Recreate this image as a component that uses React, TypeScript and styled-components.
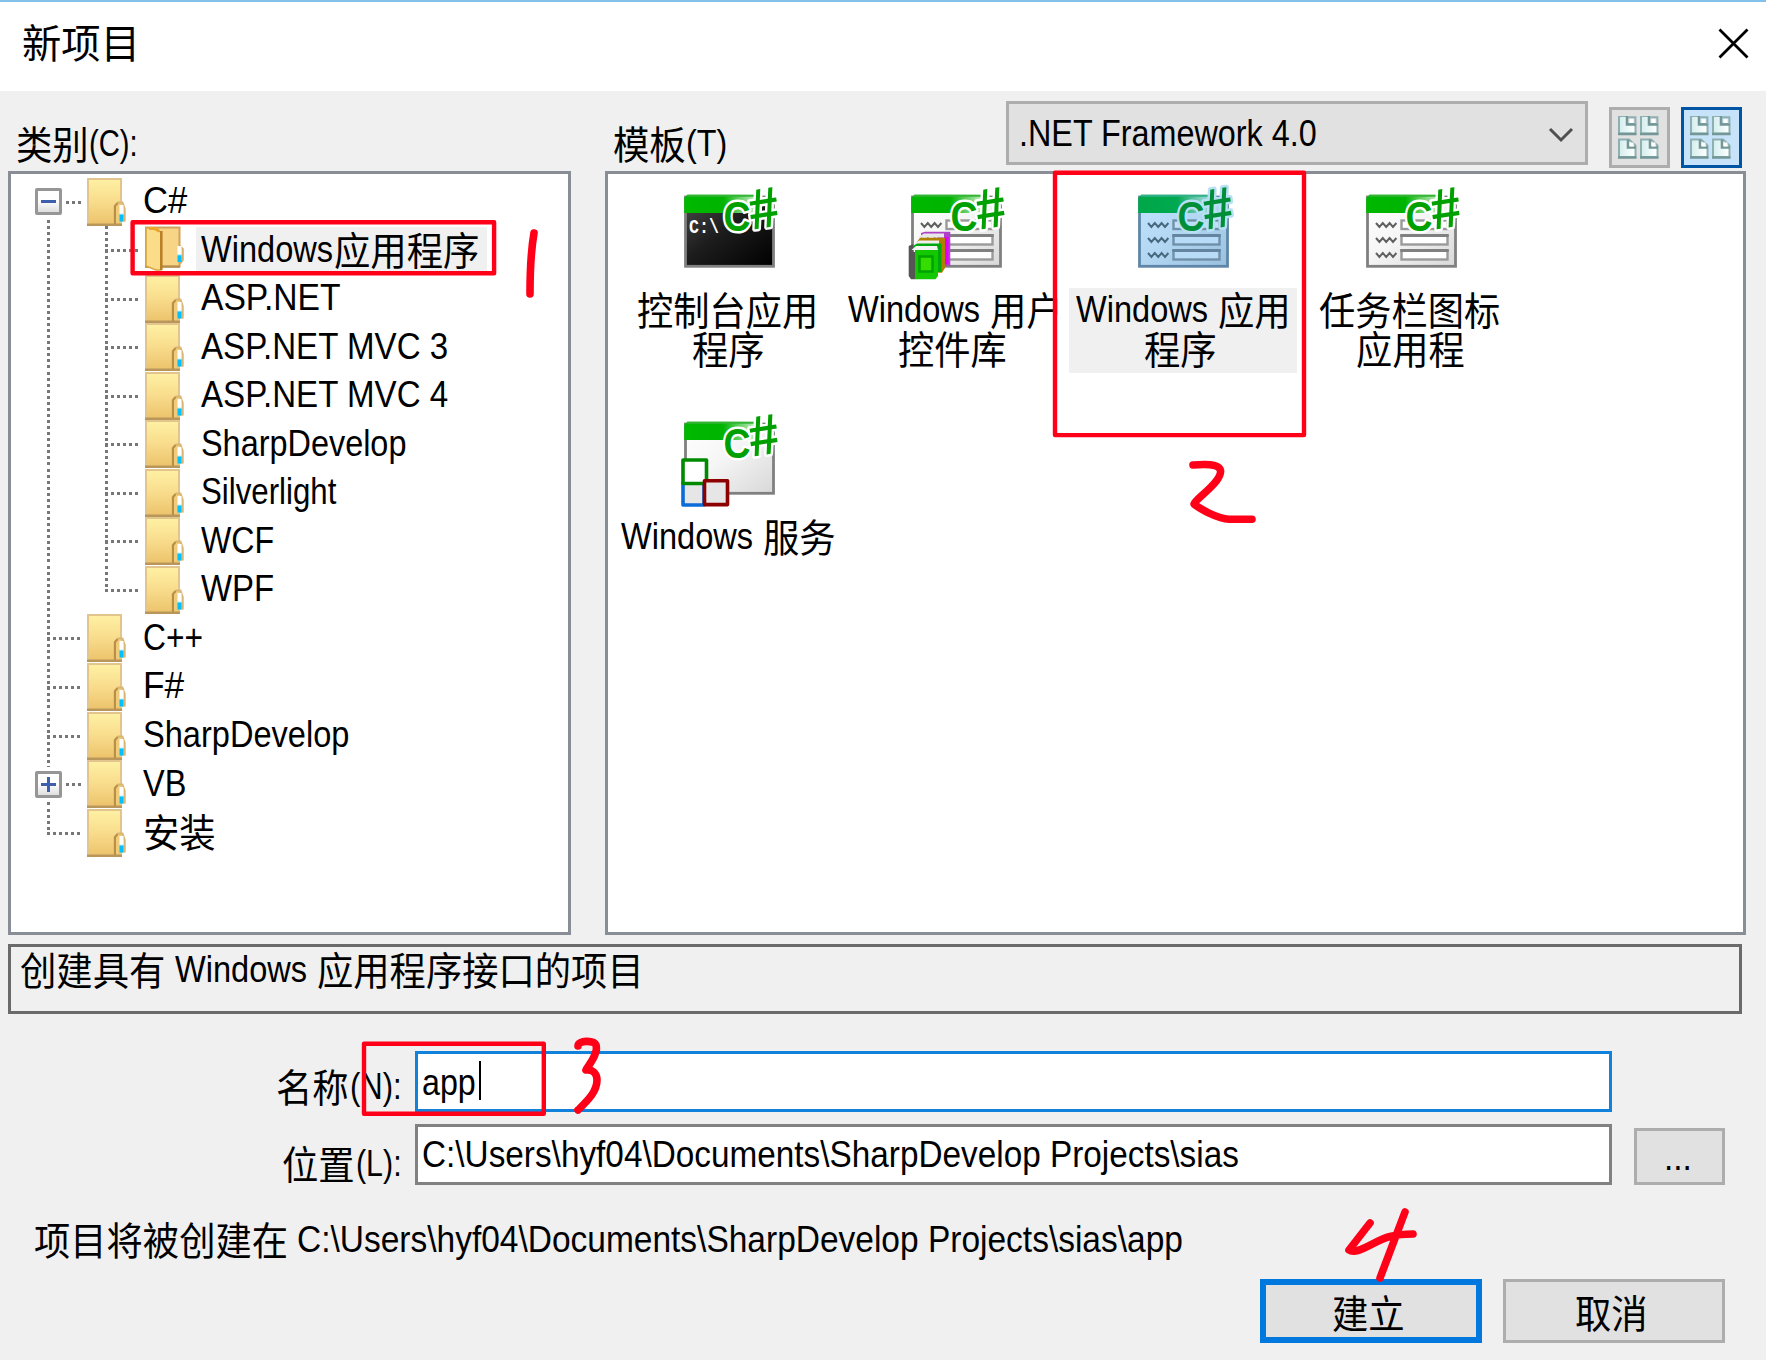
import React, { useLayoutEffect, useRef, useState } from "react";
import styled, { createGlobalStyle, css } from "styled-components";

const GlobalStyle = createGlobalStyle`
  * { box-sizing: border-box; }
  html, body { margin: 0; padding: 0; background: #f0f0f0; }
  body { width: 1766px; height: 1360px; overflow: hidden; }
`;

const latinFont = `"Liberation Sans", Arial, "Noto Sans CJK SC", sans-serif`;
const cjkFont = `"Noto Sans CJK SC", "Liberation Sans", sans-serif`;

/* ---------- text ---------- */

const Slot = styled.span<{ $w: number; $cjk?: boolean }>`
  display: block;
  flex: none;
  width: ${(p) => p.$w}px;
  padding-top: ${(p) => (p.$cjk ? 0 : 2)}px;
  white-space: pre;
`;

const Glyphs = styled.span<{ $cjk?: boolean; $size?: number }>`
  display: inline-block;
  transform-origin: 0 50%;
  line-height: 40px;
  vertical-align: top;
  font-family: ${(p) => (p.$cjk ? cjkFont : latinFont)};
  font-size: ${(p) => p.$size ?? (p.$cjk ? 38.5 : 37)}px;
`;

type FitProps = { w: number; cjk?: boolean; size?: number; children: string };

/* Condenses a run of text horizontally so that it fills the given width. */
function Fit({ w, cjk, size, children }: FitProps) {
  const ref = useRef<HTMLSpanElement>(null);
  const [scale, setScale] = useState(1);
  useLayoutEffect(() => {
    if (ref.current) setScale(w / ref.current.offsetWidth);
  }, [w, children]);
  return (
    <Slot $w={w} $cjk={cjk}>
      <Glyphs ref={ref} $cjk={cjk} $size={size} style={{ transform: `scaleX(${scale})` }}>
        {children}
      </Glyphs>
    </Slot>
  );
}

const Cjk = ({ children }: { children: string }) => (
  <Fit cjk w={children.length * 36.35}>
    {children}
  </Fit>
);

const Line = styled.div<{ $gap?: number; $center?: boolean; $trail?: number }>`
  display: flex;
  align-items: flex-start;
  height: 40px;
  gap: ${(p) => p.$gap ?? 1}px;
  padding-right: ${(p) => p.$trail ?? 0}px;
  justify-content: ${(p) => (p.$center ? "center" : "flex-start")};
  color: #000;
`;

/* ---------- window ---------- */

const Dialog = styled.div`
  position: relative;
  width: 1766px;
  height: 1360px;
  background: #f0f0f0;
  border-top: 2px solid #83c0ea;
  overflow: hidden;
`;

const TitleBar = styled.header`
  display: flex;
  justify-content: space-between;
  align-items: flex-start;
  height: 89px;
  padding: 19px 17px 0 22px;
  background: #fff;
`;

const CloseIcon = styled.svg`
  width: 31px;
  height: 31px;
  margin-top: 6.5px;
`;

const Content = styled.main`
  display: flex;
  flex-direction: column;
  padding-left: 8px;
`;

const Columns = styled.section`
  display: grid;
  grid-template-columns: 563px 1140.5px;
  column-gap: 34px;
`;

const ColumnHead = styled.div`
  display: flex;
  height: 79.5px;
  padding-left: 8px;
`;

const HeadLabel = styled.div<{ $w?: number }>`
  flex: none;
  width: ${(p) => p.$w ?? 300}px;
  padding-top: 31px;
`;

const Panel = styled.div`
  height: 764px;
  background: #fff;
  border: 3px solid #888d96;
`;

/* ---------- tree ---------- */

const Tree = styled(Panel)`
  padding-top: 4px;
`;

const TreeRow = styled.div`
  display: flex;
  height: 48.55px;
`;

const vDots = "repeating-linear-gradient(180deg, #777 0 3px, transparent 3px 6.07px)";
const hDots = "repeating-linear-gradient(90deg, #777 0 3px, transparent 3px 6.07px)";

const Gutter = styled.div<{ $w: number; $x: number; $from: number; $to: number; $hx?: number; $hw: number }>`
  display: flex;
  align-items: center;
  flex: none;
  width: ${(p) => p.$w}px;
  padding-left: 24px;
  background-image: ${vDots}, ${hDots};
  background-repeat: no-repeat;
  background-position: ${(p) => p.$x}px ${(p) => p.$from}px, ${(p) => p.$hx ?? p.$x}px 23px;
  background-size: 3px ${(p) => p.$to - p.$from}px, ${(p) => p.$hw}px 3px;
`;

const Expander = styled.div`
  display: grid;
  place-items: center;
  width: 27px;
  height: 27px;
  border: 3px solid #969696;
  border-radius: 2px;
  background: linear-gradient(#fff 45%, #dedede);
  box-shadow: 0 0 0 4px #fff;
`;

const FolderSvg = styled.svg`
  flex: none;
  width: 39px;
  height: 48.55px;
  overflow: visible;
`;

const NodeLabel = styled.div<{ $selected?: boolean }>`
  height: 44px;
  margin: 0.5px 0 0 12px;
  padding: 1px 8px 0 5px;
  ${(p) =>
    p.$selected &&
    css`
      background: #f0f0f0;
    `}
`;

const ClosedFolder = () => (
  <FolderSvg viewBox="0 0 39 48.5">
    <defs>
      <linearGradient id="fold" x1="0" y1="0" x2="0" y2="1">
        <stop offset="0" stopColor="#fff1a4" />
        <stop offset="0.5" stopColor="#f8dc8c" />
        <stop offset="1" stopColor="#ecc26a" />
      </linearGradient>
      <linearGradient id="tab" x1="0" y1="0" x2="0" y2="1">
        <stop offset="0.5" stopColor="#fff" />
        <stop offset="0.62" stopColor="#00c0ff" />
      </linearGradient>
    </defs>
    <rect x="1" y="1" width="33" height="46" fill="url(#fold)" stroke="#e2c58c" strokeWidth="2" />
    <path d="M0 46.8H35" stroke="#b9975b" strokeWidth="2.6" />
    <path d="M27.5 45V28L31 24.5H35.5L37.8 31V43.5" fill="#efcb7a" stroke="#d8b674" strokeWidth="1.8" />
    <path d="M28 46V28L30.500 25" fill="none" stroke="#b98f48" strokeWidth="2" />
    <rect x="32.5" y="27" width="4" height="16.5" fill="url(#tab)" />
  </FolderSvg>
);

const OpenFolder = () => (
  <FolderSvg viewBox="0 0 39 48.5">
    <rect x="1" y="1.5" width="33.5" height="39" fill="#f8d486" stroke="#cfa45c" strokeWidth="2" />
    <path d="M0 40.6H35" stroke="#b88f4e" strokeWidth="2.4" />
    <path d="M34.500 20L37.8 23V34L35 38" fill="#efcf8a" stroke="#d6b06a" strokeWidth="2" />
    <rect x="32.5" y="20" width="4" height="16" fill="url(#tab)" />
    <path d="M1 2H6L16 6V44H11L1 40Z" fill="#fbdc88" stroke="#d8a548" strokeWidth="1.6" />
    <path d="M4 2.5H11L14 5.5" stroke="#eba72c" strokeWidth="3" fill="none" />
    <path d="M16.3 5V44" stroke="#b9802a" strokeWidth="2.6" />
  </FolderSvg>
);

type Node = { text?: string; w?: number; cjk?: string; open?: boolean; sign?: "-" | "+" };

const children: Node[] = [
  { text: "Windows", w: 132, cjk: "应用程序", open: true },
  { text: "ASP.NET", w: 140 },
  { text: "ASP.NET MVC 3", w: 247 },
  { text: "ASP.NET MVC 4", w: 247 },
  { text: "SharpDevelop", w: 205 },
  { text: "Silverlight", w: 135 },
  { text: "WCF", w: 73 },
  { text: "WPF", w: 73 },
];

const roots: Node[] = [
  { text: "C++", w: 60 },
  { text: "F#", w: 41 },
  { text: "SharpDevelop", w: 206 },
  { text: "VB", w: 43, sign: "+" },
  { cjk: "安装" },
];

const Caption = ({ node }: { node: Node }) => (
  <NodeLabel $selected={node.open}>
    <Line>
      {node.text && <Fit w={node.w!}>{node.text}</Fit>}
      {node.cjk && <Cjk>{node.cjk}</Cjk>}
    </Line>
  </NodeLabel>
);

const Sign = ({ plus }: { plus?: boolean }) => (
  <Expander>
    <svg width="17" height="17" viewBox="0 0 17 17">
      <path d={plus ? "M1 8.5H16M8.5 1V16" : "M1 8.5H16"} stroke="#3f5fae" strokeWidth="3" />
    </svg>
  </Expander>
);

const RootRow = ({ node, from = 0, to = 48.55 }: { node: Node; from?: number; to?: number }) => (
  <TreeRow>
    <Gutter $w={76} $x={36} $from={from} $to={to} $hx={node.sign ? 55 : 36} $hw={node.sign ? 16 : 35}>
      {node.sign && <Sign plus={node.sign === "+"} />}
    </Gutter>
    <ClosedFolder />
    <Caption node={node} />
  </TreeRow>
);

/* ---------- templates ---------- */

const Templates = styled(Panel)`
  display: grid;
  grid-template-columns: repeat(4, 227.4px);
  grid-auto-rows: 227.3px;
  align-content: start;
  padding: 6px 0 0 6.5px;
`;

const Item = styled.div`
  display: flex;
  flex-direction: column;
  align-items: center;
`;

const ItemIcon = styled.svg`
  width: 97px;
  height: 100px;
  margin-bottom: 8.7px;
  overflow: visible;
`;

const ItemLabel = styled.div<{ $selected?: boolean }>`
  width: 227.4px;
  height: 84.6px;
  padding-top: 1px;
  background: ${(p) => (p.$selected ? "#f0f0f0" : "transparent")};

  & > ${Line} {
    height: 39px;
  }

  & ${Glyphs} {
    line-height: 38px;
  }
`;

const IconText = styled.text`
  font-family: "Liberation Sans", Arial, sans-serif;
  font-weight: 700;
  paint-order: stroke;
  stroke-linejoin: round;
`;

const PromptText = styled.text`
  font-family: "Liberation Mono", monospace;
  font-weight: 700;
  fill: #fff;
`;

type Kind = "console" | "control" | "form" | "tray" | "service";

const squiggle = (y: number) => `M14 ${y - 2}l3.4 4 3.4-4 3.4 4 3.4-4 3.4 4 3.4-4`;

function TemplateIcon({ kind }: { kind: Kind }) {
  const blue = kind === "form";
  const dark = kind === "console";
  const fields = kind === "control" || kind === "form" || kind === "tray";
  const green = blue ? "#008f38" : "#00a000";
  const edge = blue ? "#5f86a6" : "#808080";
  const id = `t-${kind}`;
  return (
    <ItemIcon viewBox="0 0 97 100">
      <defs>
        <linearGradient id={`${id}-b`} x1="0" y1="0" x2="1" y2="1">
          <stop offset="0" stopColor={dark ? "#4a4a4a" : blue ? "#c0e2ff" : "#fff"} />
          <stop offset="0.45" stopColor={dark ? "#1d1d1d" : blue ? "#b4d8f4" : "#f6f6f6"} />
          <stop offset="1" stopColor={dark ? "#000" : blue ? "#98c0de" : "#d8d8d8"} />
        </linearGradient>
        <linearGradient id={`${id}-h`}>
          <stop offset="0" stopColor={blue ? "#00a848" : "#00b800"} />
          <stop offset="0.5" stopColor={blue ? "#00a850" : "#00b400"} />
          <stop offset="0.8" stopColor={blue ? "#80ccc0" : "#90dc90"} />
          <stop offset="1" stopColor={blue ? "#b4dcf0" : "#e8f8e8"} />
        </linearGradient>
      </defs>
      <rect x="5.5" y="17" width="88" height="69.3" fill={`url(#${id}-b)`} stroke={edge} strokeWidth="2.8" />
      <path d="M4.2 33V18L7.5 14.7H82V33Z" fill={`url(#${id}-h)`} />
      <path d="M7 15.8H80" stroke={blue ? "#30b088" : "#34b434"} strokeWidth="2" />
      {fields && (
        <g fill="none">
          <path d={`${squiggle(45)}${squiggle(60)}${squiggle(75)}`} stroke={blue ? "#48687e" : "#606060"} strokeWidth="2" />
          <g stroke={blue ? "#7090a8" : "#9a9a9a"} strokeWidth="2.4">
            <rect x="39.5" y="40.5" width="46" height="8.5" fill={blue ? "#c4e0f6" : "#fff"} />
            <rect x="39.5" y="55.5" width="46" height="9" fill={blue ? "#b8dcf8" : "#fff"} />
            <rect x="39.5" y="70.5" width="46" height="9" fill={blue ? "#b8dcf8" : "#fff"} />
            <path d="M38.3 55.5H86.7M38.3 70.5H86.7" strokeWidth="3" stroke={blue ? "#6484a0" : "#808080"} />
          </g>
        </g>
      )}
      {dark && (
        <PromptText x="9" y="53" fontSize="21" textLength="30" lengthAdjust="spacingAndGlyphs">
          C:\
        </PromptText>
      )}
      <g fill={green} stroke={blue ? "#b8e0f4" : "#fff"} strokeWidth="5">
        <IconText x="43.5" y="51" fontSize="43" textLength="27" lengthAdjust="spacingAndGlyphs">
          C
        </IconText>
        <IconText x="68.5" y="48" fontSize="57" textLength="30" lengthAdjust="spacingAndGlyphs" transform="rotate(-9 82 28)">
          #
        </IconText>
      </g>
      {kind === "control" && (
        <g>
          <path d="M14 53L18 51.7H43.3V86H30V57H14Z" fill="#b040c8" />
          <path d="M37 57H41.5V84H37Z" fill="#e400ff" />
          <path d="M12 56.5L17 53.5H37V57.5H12Z" fill="#e8e8e8" />
          <path d="M10 62L13 57.7H38V88L35 92.7H20V62Z" fill="#b08000" />
          <path d="M7 64L12 60.5H32V65H7Z" fill="#eee" />
          <path d="M6 66L10 63.5H34.5V92H26V70H6Z" fill="#00a810" />
          <path d="M1.7 66L6 64V72H8.5V99.3H4L1.7 96Z" fill="#555" />
          <path d="M4.5 70L9 66H30L31 70Z" fill="#f4f4f4" />
          <path d="M8 70H31V96L28.5 99.3H8Z" fill="#14c800" />
          <rect x="12.5" y="76.5" width="13" height="15" fill="#34dc00" stroke="#00a400" strokeWidth="2.6" />
        </g>
      )}
      {kind === "service" && (
        <g fill="#e6e6e6" strokeWidth="3.6" strokeLinejoin="round">
          <rect x="3" y="76" width="21" height="22" stroke="#0a6cd8" />
          <rect x="3" y="53" width="23.5" height="23.5" fill="#fff" stroke="#008a00" />
          <rect x="24.5" y="73.8" width="23" height="23.8" stroke="#8c0000" />
        </g>
      )}
    </ItemIcon>
  );
}

/* ---------- controls ---------- */

const Combo = styled.div`
  display: flex;
  flex: none;
  justify-content: space-between;
  width: 582px;
  height: 64px;
  margin: 9.5px 21.3px 0 0;
  padding: 8.5px 11px 0 10px;
  background: #e1e1e1;
  border: 3px solid #adadad;
`;

const Chevron = styled.svg`
  width: 26px;
  height: 16px;
  margin-top: 15px;
`;

const ViewButton = styled.button<{ $active?: boolean }>`
  display: block;
  flex: none;
  width: 61px;
  height: 61px;
  margin: 15.5px 11.7px 0 0;
  padding: 6px;
  background: ${(p) => (p.$active ? "#c7e3f9" : "#e1e1e1")};
  border: 3px solid ${(p) => (p.$active ? "#0054a4" : "#adadad")};

  & > svg {
    display: block;
    width: 43px;
    height: 43px;
  }
`;

const sheets = [
  { x: 0, y: 0, up: true },
  { x: 22, y: 0, up: true },
  { x: 0, y: 22.5, up: false },
  { x: 22, y: 22.5, up: false },
];

const SheetsIcon = () => (
  <svg viewBox="0 0 43 43">
    <defs>
      <linearGradient id="sheet">
        <stop offset="0" stopColor="#d4eeee" />
        <stop offset="1" stopColor="#fff" />
      </linearGradient>
    </defs>
    {sheets.map((s) => (
      <g key={`${s.x}-${s.y}`} transform={`translate(${s.x} ${s.y})`}>
        <path
          d={s.up ? "M1 0V17.5H17.5V8H9V0Z" : "M1 1H11L17.5 7V18.5H1Z"}
          fill="url(#sheet)"
          stroke="#8fb0b2"
          strokeWidth="2"
        />
        <path d={s.up ? "M0 18H18.5M9 0V8.5H18" : "M0 19H18.5M10 1V9H18"} fill="none" stroke="#739696" strokeWidth="2.6" />
        {s.up && <path d="M10 1.2H17.4V8" fill="none" stroke="#8fb0b2" strokeWidth="2" />}
        <rect x="11.5" y={s.up ? 3 : 4} width="4" height="4" fill="#fff" />
      </g>
    ))}
  </svg>
);

const Description = styled.div`
  width: 1734px;
  height: 70.5px;
  margin-top: 9px;
  padding: 1px 0 0 9px;
  border: 3px solid #6a6a6a;
`;

const Field = styled.div<{ $top: number }>`
  display: flex;
  align-items: flex-start;
  margin-top: ${(p) => p.$top}px;
`;

const FieldLabel = styled.div<{ $top: number }>`
  display: flex;
  justify-content: flex-end;
  width: 394px;
  height: 60.5px;
  margin-right: 12.6px;
  padding-top: ${(p) => p.$top}px;
`;

const Input = styled.div<{ $focus?: boolean }>`
  display: flex;
  width: 1197.5px;
  height: 61px;
  padding: 6.5px 0 0 4px;
  background: #fff;
  border: 3px solid ${(p) => (p.$focus ? "#1182dc" : "#818181")};
`;

const Caret = styled.span`
  width: 2.5px;
  height: 39px;
  margin: 0 0 0 3px;
  background: #000;
`;

const Button = styled.button<{ $primary?: boolean; $w?: number; $h?: number }>`
  display: flex;
  justify-content: center;
  align-items: flex-start;
  width: ${(p) => p.$w ?? 221.5}px;
  height: ${(p) => p.$h ?? 64}px;
  padding: ${(p) => (p.$primary ? 6 : 9)}px 4px 0 0;
  color: #000;
  background: #e1e1e1;
  border: ${(p) => (p.$primary ? "6px solid #0078de" : "3px solid #adadad")};
`;

const Browse = styled(Button)`
  margin: 4px 0 0 21.5px;
  padding: 5px 3px 0 0;
`;

const Destination = styled.div`
  margin-top: 33px;
  padding-left: 26px;
`;

const Actions = styled.footer`
  display: flex;
  gap: 21.5px;
  margin-top: 20.5px;
  padding-left: 1252px;
`;

const Annotations = styled.svg`
  position: absolute;
  left: 0;
  top: -2px;
  width: 1766px;
  height: 1360px;
  pointer-events: none;
`;

export default function App() {
  return (
    <>
      <GlobalStyle />
      <Dialog>
        <TitleBar>
          <Line>
            <Fit cjk size={40} w={118}>
              新项目
            </Fit>
          </Line>
          <CloseIcon viewBox="0 0 31 31">
            <path d="M1.5 1.5L29.5 29.5M29.5 1.5L1.5 29.5" stroke="#000" strokeWidth="2.8" />
          </CloseIcon>
        </TitleBar>

        <Content>
          <Columns>
            <div>
              <ColumnHead>
                <HeadLabel>
                  <Line $gap={0}>
                    <Cjk>类别</Cjk>
                    <Fit w={49}>(C):</Fit>
                  </Line>
                </HeadLabel>
              </ColumnHead>
              <Tree>
                <RootRow node={{ text: "C#", w: 44, sign: "-" }} from={42.5} />
                {children.map((node, i) => (
                  <TreeRow key={node.text}>
                    <Gutter $w={76} $x={36} $from={0} $to={48.55} $hw={0} />
                    <Gutter $w={58} $x={17.5} $from={0} $to={i === children.length - 1 ? 24 : 48.55} $hw={34} />
                    {node.open ? <OpenFolder /> : <ClosedFolder />}
                    <Caption node={node} />
                  </TreeRow>
                ))}
                {roots.map((node, i) => (
                  <RootRow key={i} node={node} to={i === roots.length - 1 ? 24 : 48.55} />
                ))}
              </Tree>
            </div>

            <div>
              <ColumnHead>
                <HeadLabel $w={392.5}>
                  <Line $gap={0}>
                    <Cjk>模板</Cjk>
                    <Fit w={41}>(T)</Fit>
                  </Line>
                </HeadLabel>
                <Combo>
                  <Line>
                    <Fit w={298}>.NET Framework 4.0</Fit>
                  </Line>
                  <Chevron viewBox="0 0 26 16">
                    <path d="M2 2L13 13L24 2" fill="none" stroke="#505050" strokeWidth="3" />
                  </Chevron>
                </Combo>
                <ViewButton>
                  <SheetsIcon />
                </ViewButton>
                <ViewButton $active>
                  <SheetsIcon />
                </ViewButton>
              </ColumnHead>
              <Templates>
                <Item>
                  <TemplateIcon kind="console" />
                  <ItemLabel>
                    <Line $center>
                      <Cjk>控制台应用</Cjk>
                    </Line>
                    <Line $center>
                      <Cjk>程序</Cjk>
                    </Line>
                  </ItemLabel>
                </Item>
                <Item>
                  <TemplateIcon kind="control" />
                  <ItemLabel>
                    <Line $center $gap={10}>
                      <Fit w={132}>Windows</Fit>
                      <Cjk>用户</Cjk>
                    </Line>
                    <Line $center $trail={6}>
                      <Cjk>控件库</Cjk>
                    </Line>
                  </ItemLabel>
                </Item>
                <Item>
                  <TemplateIcon kind="form" />
                  <ItemLabel $selected>
                    <Line $center $gap={10}>
                      <Fit w={132}>Windows</Fit>
                      <Cjk>应用</Cjk>
                    </Line>
                    <Line $center $trail={5}>
                      <Cjk>程序</Cjk>
                    </Line>
                  </ItemLabel>
                </Item>
                <Item>
                  <TemplateIcon kind="tray" />
                  <ItemLabel>
                    <Line $center>
                      <Cjk>任务栏图标</Cjk>
                    </Line>
                    <Line $center>
                      <Cjk>应用程</Cjk>
                    </Line>
                  </ItemLabel>
                </Item>
                <Item>
                  <TemplateIcon kind="service" />
                  <ItemLabel>
                    <Line $center $gap={10}>
                      <Fit w={132}>Windows</Fit>
                      <Cjk>服务</Cjk>
                    </Line>
                  </ItemLabel>
                </Item>
              </Templates>
            </div>
          </Columns>

          <Description>
            <Line $gap={10}>
              <Cjk>创建具有</Cjk>
              <Fit w={132}>Windows</Fit>
              <Cjk>应用程序接口的项目</Cjk>
            </Line>
          </Description>

          <Field $top={37}>
            <FieldLabel $top={14}>
              <Line>
                <Cjk>名称</Cjk>
                <Fit w={52}>(N):</Fit>
              </Line>
            </FieldLabel>
            <Input $focus>
              <Line>
                <Fit w={54}>app</Fit>
              </Line>
              <Caret />
            </Input>
          </Field>

          <Field $top={11.5}>
            <FieldLabel $top={18}>
              <Line>
                <Cjk>位置</Cjk>
                <Fit w={46}>(L):</Fit>
              </Line>
            </FieldLabel>
            <Input>
              <Line>
                <Fit w={817}>{"C:\\Users\\hyf04\\Documents\\SharpDevelop Projects\\sias"}</Fit>
              </Line>
            </Input>
            <Browse $w={91} $h={57.5}>
              <Fit w={28}>...</Fit>
            </Browse>
          </Field>

          <Destination>
            <Line $gap={8.5}>
              <Cjk>项目将被创建在</Cjk>
              <Fit w={886}>{"C:\\Users\\hyf04\\Documents\\SharpDevelop Projects\\sias\\app"}</Fit>
            </Line>
          </Destination>

          <Actions>
            <Button $primary>
              <Cjk>建立</Cjk>
            </Button>
            <Button>
              <Cjk>取消</Cjk>
            </Button>
          </Actions>
        </Content>

        <Annotations viewBox="0 0 1766 1360">
          <g fill="none" stroke="#ff0018" strokeWidth="4.4" strokeLinejoin="round">
            <rect x="132.6" y="222.3" width="361.5" height="51" />
            <rect x="1055" y="172.8" width="249" height="262.3" />
            <rect x="364" y="1043.8" width="179.8" height="70" />
          </g>
          <g fill="none" stroke="#ff0018" strokeWidth="7.6" strokeLinecap="round" strokeLinejoin="round">
            <path d="M534 233Q530 256 530 294" />
            <path d="M1193 465C1206 464 1217 464 1220 469C1225 480 1195 499 1194 504C1200 509 1218 519 1229 519.3H1252" />
            <path d="M578 1046C578 1040 594 1040 596 1045C599 1053 588 1066 586 1070C592 1069 597 1073 597 1080C597 1092 587 1101 578 1110" />
            <path d="M1370 1223L1349 1250C1357 1256 1375 1240 1390 1236.500C1398 1234.500 1406 1234 1413 1234M1405 1212L1380 1278" />
          </g>
        </Annotations>
      </Dialog>
    </>
  );
}
